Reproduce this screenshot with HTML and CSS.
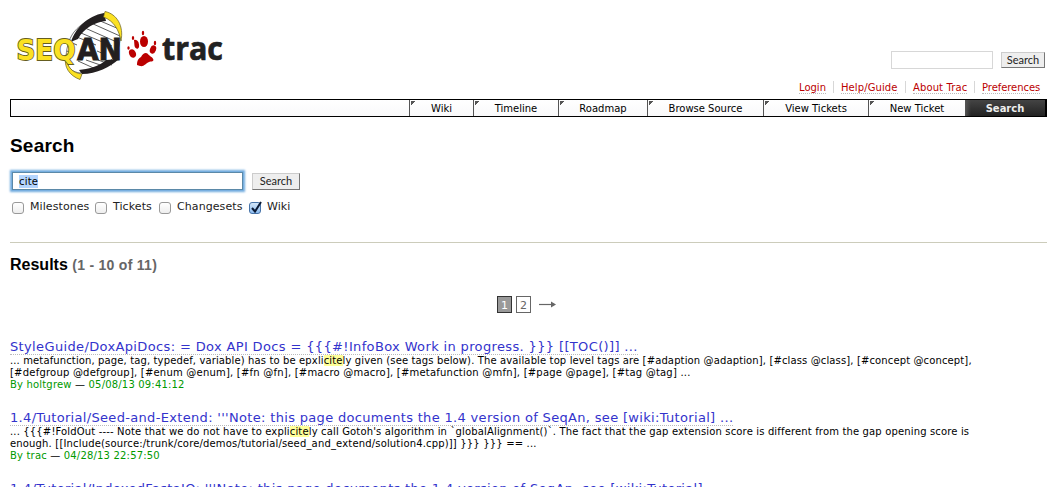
FILE: index.html
```html
<!DOCTYPE html>
<html lang="en">
<head>
<meta charset="utf-8">
<title>Search – SeqAn</title>
<link rel="stylesheet" href="styles.css">
</head>
<body>
<header class="banner">
  <svg class="logo" width="224" height="80" viewBox="0 0 224 80" role="img" aria-label="SeqAn trac">
    <path class="helix-fill" d="M66 60C66 50 68 40 74 32C82 22 92 18 106 16C116 20 121 28 120 40C118 58 109 63 98 67C90 70 84 71 80 73C73 72 68 69 66 60Z"/>
    <path class="rungs" d="M98 20L119 29M91 23L120 36M85 28L119 43M81 33L112 46M77 37L96 45M97 51L104 54M78 61L98 70M86 60L106 67M98 60L112 65M70 42L77 45M67 51L73 54"/>
    <path class="strand" d="M71 42C75 29 87 16 104 13L106 21C95 22 84 28 78 39L73 41Z"/>
    <path class="strand" d="M79 70C88 69 98 67 106 60L119 59C110 67 97 74 82 74Z"/>
    <path class="ribbon" d="M105 11.500C117 14 124 26 121 41C119 30 114 21 103.500 17Z"/>
    <path class="ribbon" d="M66 56C67 67 72 73 82 74L80 79.500C70 76 63 67 66 56Z"/>
    <text class="logo-seq" x="16.500" y="60" textLength="59" lengthAdjust="spacingAndGlyphs">SEQ</text>
    <text class="logo-an" x="77" y="60" textLength="45" lengthAdjust="spacingAndGlyphs">AN</text>
    <g class="paw">
      <path d="M137 65C137 60 139 58 141 57C143 53 146 52 148 54C149 56 153 57 153.500 60C153 62 151 61 149 62C146 63 144 67 140 66Z"/>
      <path d="M134 40C138 39 139.500 44 139 47C138 50 135.500 49 134.500 46Z"/>
      <ellipse cx="144" cy="41.500" rx="4" ry="5.500"/>
      <ellipse cx="132.500" cy="53.500" rx="3.300" ry="4.300" transform="rotate(-25 132.500 53.500)"/>
      <ellipse cx="153" cy="49.500" rx="3" ry="4.300" transform="rotate(20 153 49.500)"/>
      <ellipse cx="133" cy="38" rx="1.200" ry="2"/><ellipse cx="143" cy="33" rx="1.200" ry="2.200"/><ellipse cx="128.500" cy="48" rx="1.200" ry="1.800"/><ellipse cx="155" cy="43" rx="1.200" ry="2.200"/>
    </g>
    <text class="logo-trac" x="162" y="60" textLength="61" lengthAdjust="spacingAndGlyphs">trac</text>
  </svg>
  <div class="tools">
    <form class="quick"><input class="quick-input" type="text" aria-label="Quick search"><button class="btn btn-quick" type="button">Search</button></form>
    <ul class="metanav">
      <li><a class="l1">Login</a></li><li><a class="l2">Help/Guide</a></li><li><a class="l3">About Trac</a></li><li><a class="l4">Preferences</a></li>
    </ul>
  </div>
</header>
<nav class="mainnav">
  <a class="tab t1">Wiki</a><a class="tab t2">Timeline</a><a class="tab t3">Roadmap</a><a class="tab t4">Browse Source</a><a class="tab t5">View Tickets</a><a class="tab t6">New Ticket</a><a class="tab active">Search</a>
</nav>
<main class="content">
  <h1 class="title">Search</h1>
  <form class="search-row"><div class="field"><span class="selected">cite</span></div><button class="btn btn-main" type="button">Search</button></form>
  <div class="filters">
    <label class="filter f1"><span class="box"></span><span>Milestones</span></label>
    <label class="filter f2"><span class="box"></span><span>Tickets</span></label>
    <label class="filter f3"><span class="box"></span><span>Changesets</span></label>
    <label class="filter f4"><span class="box checked"><svg class="tick" width="14" height="15" viewBox="0 0 14 15"><path d="M3 8L6 11.500L12 2"/></svg></span><span>Wiki</span></label>
  </div>
  <h2 class="results-title">Results <span class="count">(1 - 10 of 11)</span></h2>
  <div class="paging"><span class="page current">1</span><span class="page">2</span><svg class="next" width="17" height="9" viewBox="0 0 17 9"><path d="M0 4.500H15"/><path class="head" d="M12 1.500L17 4.500L12 7.500Z"/></svg></div>
  <section class="result">
    <a class="r-title ra">StyleGuide/DoxApiDocs: = Dox API Docs = {{{#!InfoBox Work in progress. }}} [[TOC()]] ...</a>
    <p class="line a1">... metafunction, page, tag, typedef, variable) has to be epxli<mark>cite</mark>ly given (see tags below). The available top level tags are [#adaption @adaption], [#class @class], [#concept @concept],</p>
    <p class="line a2">[#defgroup @defgroup], [#enum @enum], [#fn @fn], [#macro @macro], [#metafunction @mfn], [#page @page], [#tag @tag] ...</p>
    <p class="line by">By holtgrew <span class="dash">—</span> 05/08/13 09:41:12</p>
  </section>
  <section class="result">
    <a class="r-title rb">1.4/Tutorial/Seed-and-Extend: '''Note: this page documents the 1.4 version of SeqAn, see [wiki:Tutorial] ...</a>
    <p class="line b1">... {{{#!FoldOut ---- Note that we do not have to expli<mark>cite</mark>ly call Gotoh's algorithm in `globalAlignment()`. The fact that the gap extension score is different from the gap opening score is</p>
    <p class="line b2">enough. [[Include(source:/trunk/core/demos/tutorial/seed_and_extend/solution4.cpp)]] }}} }}} == ...</p>
    <p class="line by">By trac <span class="dash">—</span> 04/28/13 22:57:50</p>
  </section>
  <section class="result last">
    <a class="r-title rb">1.4/Tutorial/IndexedFastaIO: '''Note: this page documents the 1.4 version of SeqAn, see [wiki:Tutorial] ...</a>
  </section>
</main>
</body>
</html>
```
FILE: styles.css
```css
* { box-sizing: border-box; }
html { overflow: hidden; }
body { margin: 0; height: 487px; overflow: hidden; background: #fff; color: #000; font: 10px/12px Verdana, "DejaVu Sans", sans-serif; }
.banner { height: 99px; padding-right: 12px; display: flex; justify-content: space-between; }
.logo { flex: none; display: block; }
.logo text { font-family: "DejaVu Sans", sans-serif; font-weight: bold; }
.logo-seq { font-size: 29px; fill: #fbe122; stroke: #655d20; stroke-width: 1.800px; paint-order: stroke; }
.logo-an { font-size: 30px; fill: #231f20; stroke: #231f20; stroke-width: .9px; }
.logo .logo-trac { font-family: "Open Sans", sans-serif; font-size: 32px; fill: #222; stroke: #222; stroke-width: .7px; }
.helix-fill { fill: #fff; stroke: #444; stroke-width: .7px; }
.rungs { fill: none; stroke: #333; stroke-width: .8px; }
.strand { fill: #231f20; }
.ribbon { fill: #fbe122; stroke: #655d20; stroke-width: .7px; }
.paw { fill: #b00; }
.tools { padding-top: 51px; display: flex; flex-direction: column; align-items: flex-end; }
.quick { display: flex; align-items: center; gap: 8px; height: 18px; }
.quick-input { width: 102px; height: 18px; border: 1px solid #d7d7d7; padding: 0; }
.btn { padding: 0; border: 1px solid; border-color: #ccc #777 #777 #ccc; background: #eee; color: #222; font: 11px/14px "Lato", sans-serif; }
.btn-quick { width: 44px; height: 16px; }
.btn-main { width: 48px; height: 17px; }
.metanav { display: flex; list-style: none; margin: 12px 5px 0 0; padding: 0; }
.metanav li { padding: 0 7px; border-left: 1px solid #d7d7d7; height: 12px; line-height: 13px; }
.metanav li:first-child { border: 0; }
.metanav li:last-child { padding-right: 0; }
.metanav a { display: block; color: #b00; border-bottom: 1px dotted #bbb; height: 13px; white-space: nowrap; }
.l1 { width: 27px; } .l2 { width: 57px; letter-spacing: .1px; } .l3 { width: 54px; letter-spacing: .12px; } .l4 { width: 58px; letter-spacing: -.06px; }
.mainnav { margin: 0 10px; height: 18px; border: 1px solid #000; border-right-width: 2px; display: flex; justify-content: flex-end; background: linear-gradient(#fff, #f9f9fa); }
.tab { border-left: 1px solid #555; height: 16px; line-height: 17px; text-align: center; white-space: nowrap; background: linear-gradient(135deg, #555 3px, transparent 3.500px) 1px 1px no-repeat; }
.t1 { width: 64px; } .t2 { width: 85px; } .t3 { width: 89px; } .t4 { width: 116px; } .t5 { width: 105px; } .t6 { width: 97px; }
.active { width: 80px; border: 0; color: #eee; font-weight: bold; background: linear-gradient(90deg, #555 0, transparent 6px), linear-gradient(#444, #222); }
.content { padding: 0 10px; }
.title { margin: 17px 0 0; font: bold 19px/24px "Liberation Sans", Arial, sans-serif; letter-spacing: .2px; }
.search-row { display: flex; align-items: center; margin: 14px 0 0 2px; height: 18px; gap: 9px; }
.field { width: 231px; height: 18px; border: 1px solid #5b89a8; padding: 2px 6px; box-shadow: 0 0 2px 2px #6faade; }
.selected { display: inline-block; background: #b4d5fe; height: 13px; line-height: 14px; font-size: 10px; letter-spacing: .2px; }
.filters { display: flex; margin: 10px 0 0 2px; height: 15px; font-size: 11px; color: #222; }
.filter { display: flex; height: 14px; line-height: 14px; gap: 6px; white-space: nowrap; }
.f1 { width: 83px; } .f2 { width: 64px; } .f3 { width: 90px; }
.filter > span:last-child { letter-spacing: .08px; }
.box { position: relative; flex: none; width: 12px; height: 12px; margin-top: 2px; border: 1px solid #999; border-radius: 3px; background: linear-gradient(#fff, #eee); }
.checked { border-color: #4673a9; background: linear-gradient(#d3e6f8, #8dbcf0); }
.tick { position: absolute; left: -1px; top: -3px; fill: none; stroke: #0a1a35; stroke-width: 2px; }
.results-title { margin: 27px 0 0; padding-top: 12px; border-top: 1px solid #ccb; font: bold 16px/20px "Liberation Sans", Arial, sans-serif; }
.count { color: #666; font-size: 14px; letter-spacing: .28px; }
.paging { height: 17px; margin: 21px 0 0 487px; display: flex; align-items: center; gap: 4px; }
.page { width: 15px; height: 17px; border: 1px solid #666; color: #666; text-align: center; font-size: 11px; line-height: 17px; }
.current { background: #999; color: #fff; border-color: #333; }
.next { margin-left: 4px; fill: none; stroke: #666; stroke-width: 1.200px; }
.head { fill: #666; stroke: none; }
.result { height: 71px; }
.paging + .result { margin-top: 26px; }
.last { height: 16px; }
.r-title { display: block; width: max-content; height: 16px; color: #33c; font-size: 13px; line-height: 15px; border-bottom: 1px dotted #bbb; white-space: nowrap; }
.ra { letter-spacing: .36px; }
.rb { letter-spacing: .325px; }
.line { margin: 0; height: 12px; line-height: 12px; white-space: nowrap; }
.a1 { letter-spacing: .125px; }
.a2 { letter-spacing: .215px; }
.b1 { letter-spacing: .15px; }
.b2 { letter-spacing: .165px; }
mark { background: #ff9; color: inherit; }
.by { color: #090; letter-spacing: .18px; }
.dash { color: #000; }
```
